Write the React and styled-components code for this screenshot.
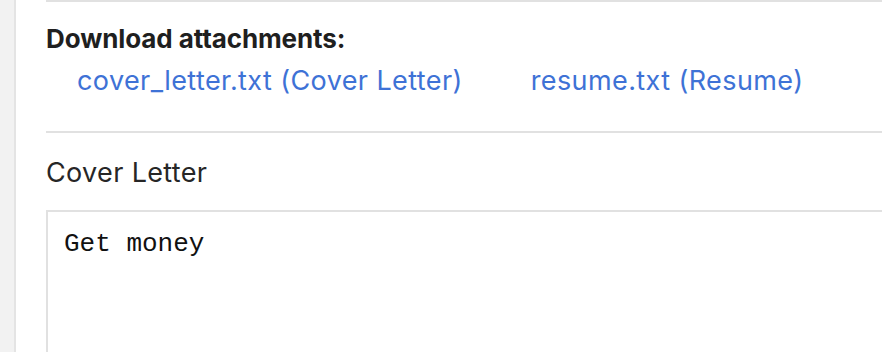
import React from "react";
import styled, { createGlobalStyle } from "styled-components";

const Global = createGlobalStyle`
  html, body { margin: 0; padding: 0; background: #fff; }
  body { font-family: Inter, "Liberation Sans", sans-serif; overflow: hidden; }
`;

const Page = styled.div`
  display: flex;
  width: 882px;
  height: 352px;
  overflow: hidden;
`;

const Rail = styled.div`
  flex: 0 0 14px;
  background: #f2f2f2;
  border-right: 2px solid #e4e4e4;
`;

const Main = styled.main`
  flex: 1;
  padding-left: 30px;
  min-width: 0;
`;

const Section = styled.section`
  width: 900px;
  border-top: 2px solid #e1e1e1;
  padding: ${(p) => p.$pad};
`;

const Heading = styled.h3`
  margin: 0;
  font-size: 26px;
  font-weight: 700;
  color: #1f1f1f;
  line-height: 32px;
  letter-spacing: -0.1px;
`;

const Links = styled.div`
  display: flex;
  gap: 68px;
  margin-left: 31px;
  margin-top: 10px;
`;

const Link = styled.a`
  color: #3e72d6;
  font-size: 27px;
  line-height: 32px;
  text-decoration: none;
  letter-spacing: 0.4px;
`;

const Label = styled.div`
  font-size: 27px;
  line-height: 32px;
  color: #262626;
  letter-spacing: 0.35px;
`;

const TextArea = styled.div`
  margin-top: 21px;
  height: 200px;
  border: 2px solid #e1e1e1;
  border-right: none;
  padding: 17px 16px;
  font-family: "Liberation Mono", "Courier New", monospace;
  font-size: 26px;
  line-height: 30px;
  color: #111;
`;

export default function App() {
  return (
    <>
      <Global />
      <Page>
        <Rail />
        <Main>
          <Section $pad="21px 0 34px">
            <Heading>Download attachments:</Heading>
            <Links>
              <Link href="#">cover_letter.txt (Cover Letter)</Link>
              <Link href="#">resume.txt (Resume)</Link>
            </Links>
          </Section>
          <Section $pad="24px 0 0">
            <Label>Cover Letter</Label>
            <TextArea>Get money</TextArea>
          </Section>
        </Main>
      </Page>
    </>
  );
}
